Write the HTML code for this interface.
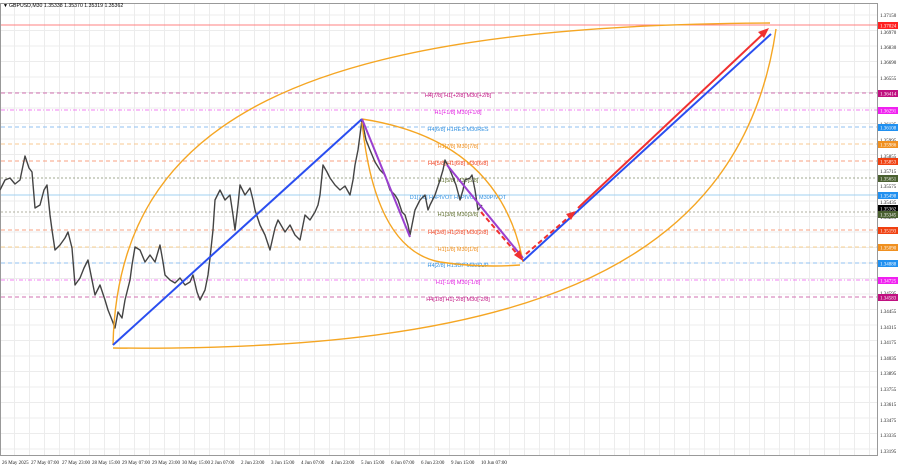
<!DOCTYPE html>
<html><head><meta charset="utf-8"><style>
html,body{margin:0;padding:0;background:#fff;}
svg{display:block;font-family:"Liberation Sans",sans-serif;}
</style></head><body>
<svg width="900" height="468" viewBox="0 0 900 468" xmlns="http://www.w3.org/2000/svg">
<rect width="900" height="468" fill="#fff"/>
<defs>
<pattern id="g" x="0" y="0" width="15" height="15.5" patternUnits="userSpaceOnUse">
<path d="M14.5 0V15.5M0 15H15" stroke="#ececec" stroke-width="1" fill="none"/>
</pattern>
</defs>
<rect x="1" y="4" width="876" height="452" fill="url(#g)"/>
<rect x="0.5" y="3.5" width="877" height="452" fill="none" stroke="#999"/>
<g stroke-width="1" fill="none">
<line x1="1" y1="25" x2="877" y2="25" stroke="#ff8080"/>
<line x1="1" y1="93" x2="877" y2="93" stroke="#d070b0" stroke-dasharray="4,3"/>
<line x1="1" y1="110" x2="877" y2="110" stroke="#f080f0" stroke-dasharray="4,2,1,2"/>
<line x1="1" y1="127" x2="877" y2="127" stroke="#90c0f0" stroke-dasharray="4,3"/>
<line x1="1" y1="144" x2="877" y2="144" stroke="#f8c890" stroke-dasharray="4,3"/>
<line x1="1" y1="161" x2="877" y2="161" stroke="#f8a080" stroke-dasharray="4,3"/>
<line x1="1" y1="178" x2="877" y2="178" stroke="#a0a890" stroke-dasharray="2,2"/>
<line x1="1" y1="195" x2="877" y2="195" stroke="#a0d0f0"/>
<line x1="1" y1="212" x2="877" y2="212" stroke="#b0b0a0" stroke-dasharray="2,2"/>
<line x1="1" y1="230" x2="877" y2="230" stroke="#f8a080" stroke-dasharray="4,3"/>
<line x1="1" y1="247" x2="877" y2="247" stroke="#f8d090" stroke-dasharray="4,3"/>
<line x1="1" y1="263" x2="877" y2="263" stroke="#90c0f0" stroke-dasharray="4,3"/>
<line x1="1" y1="280" x2="877" y2="280" stroke="#f080f0" stroke-dasharray="4,2,1,2"/>
<line x1="1" y1="297" x2="877" y2="297" stroke="#d070b0" stroke-dasharray="4,3"/>
</g>
<g font-size="5.5" text-anchor="middle">
<text x="458" y="97" fill="#c01080">H4[7/8] H1[+2/8] M30[+2/8]</text>
<text x="458" y="114" fill="#e020e0">H1[+1/8] M30[+1/8]</text>
<text x="458" y="131" fill="#3090e0">H4[6/8] H1RES M30RES</text>
<text x="458" y="148" fill="#f09020">H1[7/8] M30[7/8]</text>
<text x="458" y="165" fill="#f04020">H4[5/8] H1[6/8] M30[6/8]</text>
<text x="458" y="182" fill="#607030">H1[5/8] M30[5/8]</text>
<text x="458" y="199" fill="#3090e0">D1[7/8] H4PIVOT H1PIVOT M30PIVOT</text>
<text x="458" y="216" fill="#607030">H1[3/8] M30[3/8]</text>
<text x="458" y="234" fill="#f04020">H4[3/8] H1[2/8] M30[2/8]</text>
<text x="458" y="251" fill="#f09020">H1[1/8] M30[1/8]</text>
<text x="458" y="267" fill="#3090e0">H4[2/8] H1SUP M30SUP</text>
<text x="458" y="284" fill="#e020e0">H1[-1/8] M30[-1/8]</text>
<text x="458" y="301" fill="#c01080">H4[1/8] H1[-2/8] M30[-2/8]</text>
</g>
<polyline fill="none" stroke="#444" stroke-width="1.4" stroke-linejoin="round" points="0,190 5,180 10,178 15,184 20,180 25,156 29,168 32,172 35,208 40,205 44,190 47,185 50,215 52,230 55,250 60,245 65,238 68,232 72,248 75,285 80,278 84,268 88,260 92,280 95,295 100,285 105,300 108,310 112,320 115,328 118,312 122,318 125,300 130,280 132,265 135,247 140,250 145,262 150,255 155,262 160,245 163,262 165,275 170,280 175,283 180,278 185,285 190,282 193,275 197,292 200,300 205,290 208,275 210,258 213,230 215,200 220,190 225,200 230,195 233,215 235,230 238,205 240,185 245,195 250,188 253,200 255,210 260,225 265,235 270,250 275,228 278,220 285,232 290,225 295,235 300,240 303,225 305,215 310,220 315,212 318,205 320,195 323,165 327,172 330,178 335,185 340,190 345,186 350,195 353,180 355,165 358,150 362,120 366,140 370,150 375,162 380,170 385,175 390,190 395,195 398,200 402,212 405,215 408,225 410,235 413,220 415,210 420,200 425,195 428,210 430,205 435,195 440,180 443,170 445,160 450,170 452,175 456,185 460,200 463,190 465,180 470,178 472,175 475,190 478,210 482,205"/>
<g fill="none" stroke="#f5a623" stroke-width="1.4">
<path d="M113,345 C118,120 300,25 770,23"/>
<path d="M113,348 C500,352 740,280 776,29"/>
<path d="M362,119 Q500,140 523,262"/>
<path d="M362,122 Q375,250 440,262 Q480,268 520,265"/>
</g>
<line x1="113" y1="345" x2="362" y2="119" stroke="#2a4ef0" stroke-width="2"/>
<line x1="523" y1="261" x2="771" y2="34" stroke="#2a4ef0" stroke-width="2"/>
<line x1="362" y1="119" x2="410" y2="237" stroke="#9b40d0" stroke-width="2"/>
<line x1="447" y1="165" x2="523" y2="258" stroke="#9b40d0" stroke-width="2"/>
<line x1="481" y1="212" x2="518" y2="255" stroke="#f03030" stroke-width="2" stroke-dasharray="5,3"/>
<polygon points="523,261 514,255 520,250" fill="#f03030"/>
<line x1="526" y1="254" x2="570" y2="216" stroke="#f03030" stroke-width="2" stroke-dasharray="5,3"/>
<polygon points="576,211 566,214 571,220" fill="#f03030"/>
<line x1="578" y1="208" x2="764" y2="33" stroke="#f03030" stroke-width="2"/>
<polygon points="769,28 758,32 764,38" fill="#f03030"/>
<text x="3" y="7" font-size="5" fill="#000">▼</text>
<text x="9" y="7" font-size="5.2" fill="#000">GBPUSD,M30  1.35338 1.35370 1.35319 1.35362</text>
<g font-size="5" fill="#222" font-family="Liberation Serif,serif">
<text x="880" y="17">1.37150</text><text x="880" y="34">1.36970</text><text x="880" y="49">1.36830</text><text x="880" y="64">1.36690</text><text x="880" y="80">1.36555</text><text x="880" y="111">1.36275</text><text x="880" y="126">1.36135</text><text x="880" y="142">1.35995</text><text x="880" y="158">1.35855</text><text x="880" y="173">1.35715</text><text x="880" y="188">1.35575</text><text x="880" y="204">1.35435</text><text x="880" y="219">1.35295</text><text x="880" y="295">1.34595</text><text x="880" y="313">1.34455</text><text x="880" y="329">1.34315</text><text x="880" y="344">1.34175</text><text x="880" y="360">1.34035</text><text x="880" y="375">1.33895</text><text x="880" y="391">1.33755</text><text x="880" y="406">1.33615</text><text x="880" y="422">1.33475</text><text x="880" y="437">1.33335</text><text x="880" y="453">1.33195</text>
</g>
<g font-size="5" fill="#fff" font-family="Liberation Serif,serif">
<rect x="878" y="22" width="20" height="7" fill="#ff2020"/><text x="880" y="27.5">1.37024</text>
<rect x="878" y="90" width="20" height="7" fill="#c01080"/><text x="880" y="95.5">1.36414</text>
<rect x="878" y="107" width="20" height="7" fill="#f020f0"/><text x="880" y="112.5">1.36291</text>
<rect x="878" y="124" width="20" height="7" fill="#2090f0"/><text x="880" y="129.5">1.36108</text>
<rect x="878" y="141" width="20" height="7" fill="#f09020"/><text x="880" y="146.5">1.35986</text>
<rect x="878" y="158" width="20" height="7" fill="#f04010"/><text x="880" y="163.5">1.35853</text>
<rect x="878" y="175" width="20" height="7" fill="#4a6030"/><text x="880" y="180.5">1.35651</text>
<rect x="878" y="192" width="20" height="7" fill="#2090f0"/><text x="880" y="197.5">1.35498</text>
<rect x="878" y="205" width="20" height="7" fill="#000"/><text x="880" y="210.5">1.35362</text>
<rect x="878" y="211" width="20" height="7" fill="#4a6030"/><text x="880" y="216.5">1.35345</text>
<rect x="878" y="227" width="20" height="7" fill="#f04010"/><text x="880" y="232.5">1.35193</text>
<rect x="878" y="244" width="20" height="7" fill="#f09020"/><text x="880" y="249.5">1.35090</text>
<rect x="878" y="260" width="20" height="7" fill="#2090f0"/><text x="880" y="265.5">1.34888</text>
<rect x="878" y="277" width="20" height="7" fill="#f020f0"/><text x="880" y="282.5">1.34725</text>
<rect x="878" y="294" width="20" height="7" fill="#c01080"/><text x="880" y="299.5">1.34583</text>
</g>
<g font-size="5" fill="#222" font-family="Liberation Serif,serif">
<text x="2" y="464">26 May 2025</text><text x="31" y="464">27 May 07:00</text><text x="62" y="464">27 May 23:00</text><text x="92" y="464">28 May 15:00</text><text x="122" y="464">29 May 07:00</text><text x="152" y="464">29 May 23:00</text><text x="182" y="464">30 May 15:00</text><text x="211" y="464">2 Jun 07:00</text><text x="241" y="464">2 Jun 23:00</text><text x="271" y="464">3 Jun 15:00</text><text x="301" y="464">4 Jun 07:00</text><text x="331" y="464">4 Jun 23:00</text><text x="361" y="464">5 Jun 15:00</text><text x="391" y="464">6 Jun 07:00</text><text x="421" y="464">6 Jun 23:00</text><text x="451" y="464">9 Jun 15:00</text><text x="481" y="464">10 Jun 07:00</text>
</g>
</svg>
</body></html>
